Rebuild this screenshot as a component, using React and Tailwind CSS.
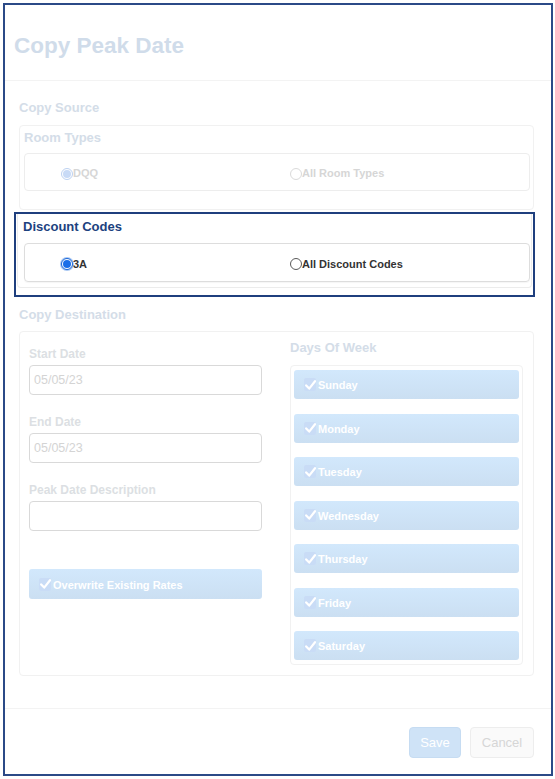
import React from "react";

const font = { fontFamily: '"Liberation Sans", Arial, Helvetica, sans-serif' };

function Check({ className = "" }) {
  return (
    <svg width="11" height="10" viewBox="0 0 11 10" className={className}>
      <path d="M1.2 5.4 L4.2 8.6 L10 1.2" fill="none" stroke="#ffffff" strokeWidth="2.2" strokeLinecap="round" strokeLinejoin="round" />
    </svg>
  );
}

function ToggleBtn({ label, className = "" }) {
  return (
    <div className={"flex items-center rounded-[3px] bg-gradient-to-b from-[#d2e8fc] to-[#cbdff2] " + className}>
      <span className="ml-[10px] mr-[2px] flex h-[13px] w-[12px] items-center justify-center rounded-[2px] bg-[#c9dcf6]">
        <Check />
      </span>
      <span className="pt-[1px] text-[11px] font-bold leading-[14px] text-white">{label}</span>
    </div>
  );
}

function Radio({ checked, faint }) {
  if (faint) {
    return checked ? (
      <span className="flex h-[12px] w-[12px] items-center justify-center rounded-full border border-[#bcd1f1] bg-white">
        <span className="h-[8px] w-[8px] rounded-full bg-[#c8daf6]" />
      </span>
    ) : (
      <span className="h-[12px] w-[12px] rounded-full border border-[#dadada] bg-white" />
    );
  }
  return checked ? (
    <span className="flex h-[12px] w-[12px] items-center justify-center rounded-full border border-[#1a66d9] bg-white shadow-[0_0_0_1px_#a9c8f3]">
      <span className="h-[8px] w-[8px] rounded-full bg-[#1a6ee8]" />
    </span>
  ) : (
    <span className="h-[12px] w-[12px] rounded-full border border-[#5a5a5a] bg-white" />
  );
}

function Field({ label, value, className = "" }) {
  return (
    <div className={className}>
      <div className="h-[16px] text-[12px] font-bold leading-[16px] text-[#dcdfe3]">{label}</div>
      <div className="mt-[3px] flex h-[30px] items-center rounded-[4px] border border-[#d9d9d9] bg-white pl-[4px] text-[12.5px] text-[#d4d4d4]">
        {value}
      </div>
    </div>
  );
}

export default function App() {
  const days = ["Sunday", "Monday", "Tuesday", "Wednesday", "Thursday", "Friday", "Saturday"];
  return (
    <div className="h-[779px] w-[555px] bg-white pl-[3px] pt-[3px]" style={font}>
      <div className="flex h-[773px] w-[550px] flex-col border-2 border-[#2b4a87] bg-white">
        {/* header */}
        <div className="h-[76px] border-b border-[#f3f3f3] pl-[9px] pt-[29px]">
          <div className="text-[22.5px] font-bold leading-[24px] text-[#d0dcea]">Copy Peak Date</div>
        </div>

        {/* body */}
        <div className="flex-1 pl-[14px] pr-[17px] pt-[19px]">
          <div className="h-[16px] text-[13px] font-bold leading-[16px] text-[#d4dde8]">Copy Source</div>

          <div className="mt-[9px] rounded-[4px] border border-[#f1f1f1] pb-[18px] pt-[3px]">
            <div className="h-[16px] pl-[4px] pt-[1px] text-[13px] font-bold leading-[16px] text-[#d4dde8]">Room Types</div>
            <div className="ml-[4px] mr-[3px] mt-[8px] flex h-[38px] items-center rounded-[4px] border border-[#ededed] pl-[36px] pt-[3px]">
              <div className="flex w-[229px] items-center">
                <Radio checked faint />
                <span className="text-[11px] font-bold text-[#d6d6d6]">DQQ</span>
              </div>
              <div className="flex items-center">
                <Radio faint />
                <span className="text-[11px] font-bold text-[#d6d6d6]">All Room Types</span>
              </div>
            </div>
          </div>

          {/* highlighted discount codes */}
          <div className="-ml-[5px] -mr-[1px] mt-[2px] border-2 border-[#1f3f7e] px-[1px] pb-[7px]">
            <div className="rounded-b-[4px] border border-t-0 border-[#ececec] pb-[5px] pt-[4px]">
              <div className="h-[16px] pl-[5px] pt-[1px] text-[13px] font-bold leading-[16px] text-[#1c427f]">Discount Codes</div>
              <div className="ml-[6px] mr-[1px] mt-[9px] flex h-[39px] items-center rounded-[4px] border border-[#dddddd] pl-[36px] pt-[3px] shadow-[0_1px_1px_rgba(0,0,0,0.04)]">
                <div className="flex w-[229px] items-center">
                  <Radio checked />
                  <span className="text-[11px] font-bold text-[#333333]">3A</span>
                </div>
                <div className="flex items-center">
                  <Radio />
                  <span className="text-[11px] font-bold text-[#333333]">All Discount Codes</span>
                </div>
              </div>
            </div>
          </div>

          <div className="mt-[10px] h-[16px] text-[13px] font-bold leading-[16px] text-[#d4dde8]">Copy Destination</div>

          <div className="mt-[8px] flex rounded-[4px] border border-[#f1f1f1]">
            <div className="ml-[9px] w-[233px] pt-[14px]">
              <Field label="Start Date" value="05/05/23" />
              <Field label="End Date" value="05/05/23" className="mt-[19px]" />
              <Field label="Peak Date Description" value="" className="mt-[19px]" />
              <ToggleBtn label="Overwrite Existing Rates" className="mt-[38px] h-[30px]" />
            </div>
            <div className="ml-[28px] mr-[10px] w-[233px] pb-[10px] pt-[8px]">
              <div className="h-[16px] text-[13px] font-bold leading-[16px] text-[#d4dde8]">Days Of Week</div>
              <div className="mt-[9px] flex h-[300px] flex-col justify-between rounded-[4px] border border-[#f1f1f1] px-[3px] py-[4px]">
                {days.map((d) => (
                  <ToggleBtn key={d} label={d} className="h-[29px]" />
                ))}
              </div>
            </div>
          </div>
        </div>

        {/* footer */}
        <div className="flex h-[66px] justify-end gap-[9px] border-t border-[#f3f3f3] pr-[17px] pt-[18px]">
          <div className="flex h-[31px] w-[52px] items-center justify-center rounded-[4px] border border-[#c6dcf2] bg-[#cfe3f7] text-[13px] text-white">
            Save
          </div>
          <div className="flex h-[31px] w-[64px] items-center justify-center rounded-[4px] border border-[#ededed] bg-[#fafafa] text-[13px] text-[#d6d6d6]">
            Cancel
          </div>
        </div>
      </div>
    </div>
  );
}
